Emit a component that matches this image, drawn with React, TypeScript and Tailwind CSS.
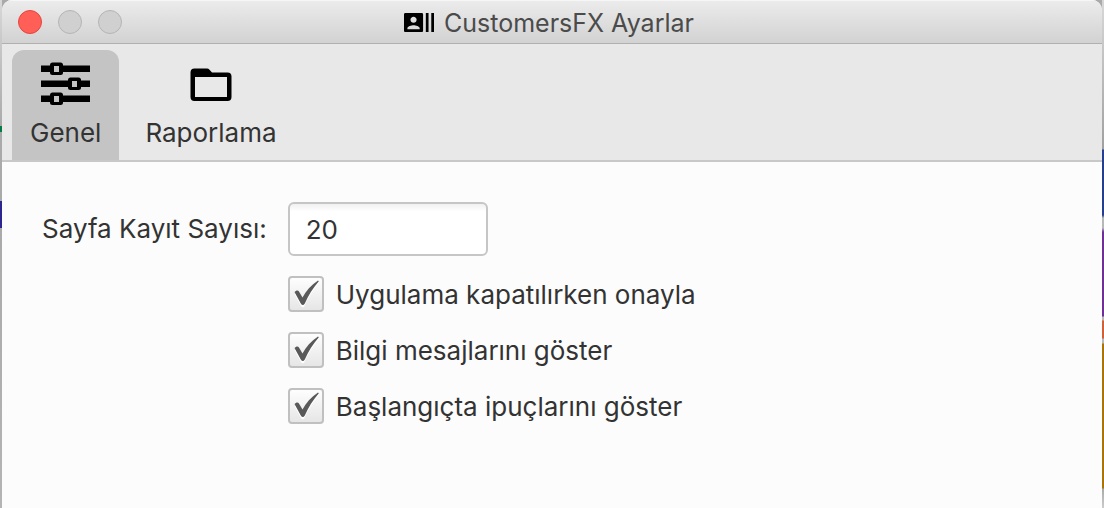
import { useState } from "react";
import type { ReactNode } from "react";

function SlidersIcon() {
  return (
    <svg width="50" height="44" viewBox="0 0 50 44" aria-hidden="true">
      <path d="M0 3.500h49v6.500H0zM0 18.500h49V25H0zM0 33.500h49V40H0z" />
      <rect x="9" y="0.500" width="13" height="12.500" rx="2.500" />
      <rect x="27" y="15.500" width="13" height="12.500" rx="2.500" />
      <rect x="9" y="30.500" width="13" height="12.500" rx="2.500" />
      <g fill="#c4c4c4">
        <rect x="13" y="4" width="5" height="6" />
        <rect x="31" y="19" width="5" height="6" />
        <rect x="13" y="34" width="5" height="6" />
      </g>
    </svg>
  );
}

function FolderIcon() {
  return (
    <svg width="42" height="44" viewBox="0 0 42 44" aria-hidden="true">
      <path
        fillRule="evenodd"
        d="M4.500 6.500H17c1 0 1.800.4 2.500 1.200L22 10.500h15.500a4 4 0 0 1 4 4V35a4 4 0 0 1-4 4h-33a4 4 0 0 1-4-4V10.500a4 4 0 0 1 4-4zM5 15v20h32V15z"
      />
    </svg>
  );
}

function CardsIcon() {
  return (
    <svg width="30" height="19" viewBox="1 5 22 14" preserveAspectRatio="none" aria-hidden="true">
      <path d="M21 5v14h2V5h-2zm-4 14h2V5h-2v14zM14 5H2c-.55 0-1 .45-1 1v12c0 .55.45 1 1 1h12c.55 0 1-.45 1-1V6c0-.55-.45-1-1-1zM8 7.750c1.240 0 2.250 1.010 2.250 2.250S9.240 12.250 8 12.250 5.750 11.240 5.750 10 6.760 7.750 8 7.750zM12.500 17h-9v-.75c0-1.500 3-2.250 4.500-2.250s4.500.75 4.500 2.250V17z" />
    </svg>
  );
}

function Tab({ label, active, onSelect, children }: { label: string; active: boolean; onSelect: () => void; children: ReactNode }) {
  return (
    <button
      type="button"
      role="tab"
      aria-selected={active}
      onClick={onSelect}
      className={`flex flex-col items-center gap-2 rounded-t-xl px-4 pt-3 pb-2 ${active ? "bg-[#c4c4c4]" : ""}`}
    >
      {children}
      <span className="px-0.5 leading-[38px]">{label}</span>
    </button>
  );
}

function Option({ label }: { label: string }) {
  const [checked, setChecked] = useState(true);
  return (
    <label className="flex items-center gap-3">
      <span className="grid size-9 shrink-0">
        <input
          type="checkbox"
          checked={checked}
          onChange={() => setChecked(!checked)}
          className="col-start-1 row-start-1 size-9 appearance-none rounded-[4px] border-2 border-[#c0c0c0] bg-linear-to-b from-[#fefefe] to-[#e6e6e6]"
        />
        {checked && (
          <svg className="pointer-events-none col-start-1 row-start-1" width="36" height="36" viewBox="0 0 36 36" aria-hidden="true">
            <path fill="#fff" d="M6.500 18C8 16 9.500 16.500 10 17.500l4.300 6.500C18 17 23 11 30 6.700l.7.300C25 14 20.500 21 16.500 30q-1.700 2.500-3.500 0z" />
            <path fill="#595959" d="M6.500 16C8 14 10 14 10.800 15.200L14.500 21.500C18 15 23 9 30 4.500l.8.700C25 12 20.500 19 16.800 27.500q-2 3-4 0z" />
          </svg>
        )}
      </span>
      <span className="pt-0.5 leading-[34px]">{label}</span>
    </label>
  );
}

export default function App() {
  const [tab, setTab] = useState("Genel");
  return (
    <div className="flex min-h-screen bg-[#aaaaaa] font-['Inter',sans-serif] text-[26px] leading-9 text-[#333333]">
      <div className="w-0.5 shrink-0 bg-[linear-gradient(to_bottom,#d8d8d8_0,#aaa_126px,#087a45_126px,#087a45_132px,#aaa_132px,#aaa_201px,#2c2790_201px,#2c2790_228px,#aaa_228px,#b4b4b4_100%)]" />
      <main className="flex min-w-0 flex-1 flex-col overflow-hidden rounded-t-[10px] bg-[#fcfcfc]">
        <header className="grid h-11 grid-cols-[1fr_auto_1fr] items-center border-b border-[#b0b0b0] bg-linear-to-b from-[#ececec] to-[#d2d2d2] px-4 shadow-[inset_0_1px_0_#f6f6f6]">
          <div className="flex gap-4">
            <button type="button" aria-label="Kapat" className="size-6 rounded-full border border-[#e2463f] bg-[#ff5f57]" />
            <button type="button" aria-label="Küçült" className="size-6 rounded-full border border-[#b4b4b4] bg-[#d0d0d0]" />
            <button type="button" aria-label="Büyüt" className="size-6 rounded-full border border-[#b4b4b4] bg-[#d0d0d0]" />
          </div>
          <h1 className="flex items-center gap-2.5 pt-0.5 pr-1.5 text-[25px] text-[#4b4b4b]">
            <CardsIcon />
            CustomersFX Ayarlar
          </h1>
        </header>
        <nav role="tablist" className="flex gap-2 border-b-2 border-[#c8c8c8] bg-[#e8e8e8] px-2.5 pt-1.5 text-[#333333]">
          <Tab label="Genel" active={tab === "Genel"} onSelect={() => setTab("Genel")}><SlidersIcon /></Tab>
          <Tab label="Raporlama" active={tab === "Raporlama"} onSelect={() => setTab("Raporlama")}><FolderIcon /></Tab>
        </nav>
        <form className="grid grid-cols-[auto_1fr] items-center gap-x-[21px] gap-y-5 px-10 py-10">
          <label htmlFor="page-size">Sayfa Kayıt Sayısı:</label>
          <input
            id="page-size"
            defaultValue="20"
            className="h-[54px] w-[200px] rounded-md border-2 border-[#c6c6c6] bg-linear-to-b from-[#f1f1f1] to-white to-15% px-4 outline-none"
          />
          <div className="col-start-2 flex flex-col items-start gap-5">
            <Option label="Uygulama kapatılırken onayla" />
            <Option label="Bilgi mesajlarını göster" />
            <Option label="Başlangıçta ipuçlarını göster" />
          </div>
        </form>
      </main>
      <div className="w-0.5 shrink-0 bg-[linear-gradient(to_bottom,#d8d8d8_0,#a0a0a0_149px,#263f8c_150px,#263f8c_215px,#b8b8b8_218px,#b8b8b8_228px,#6f3096_232px,#6f3096_316px,#b8b8b8_317px,#b8b8b8_320px,#cf6038_321px,#cf6038_338px,#b8b8b8_339px,#b8b8b8_343px,#a97408_344px,#a97408_488px,#aaa_489px,#ccc_508px)]" />
    </div>
  );
}
